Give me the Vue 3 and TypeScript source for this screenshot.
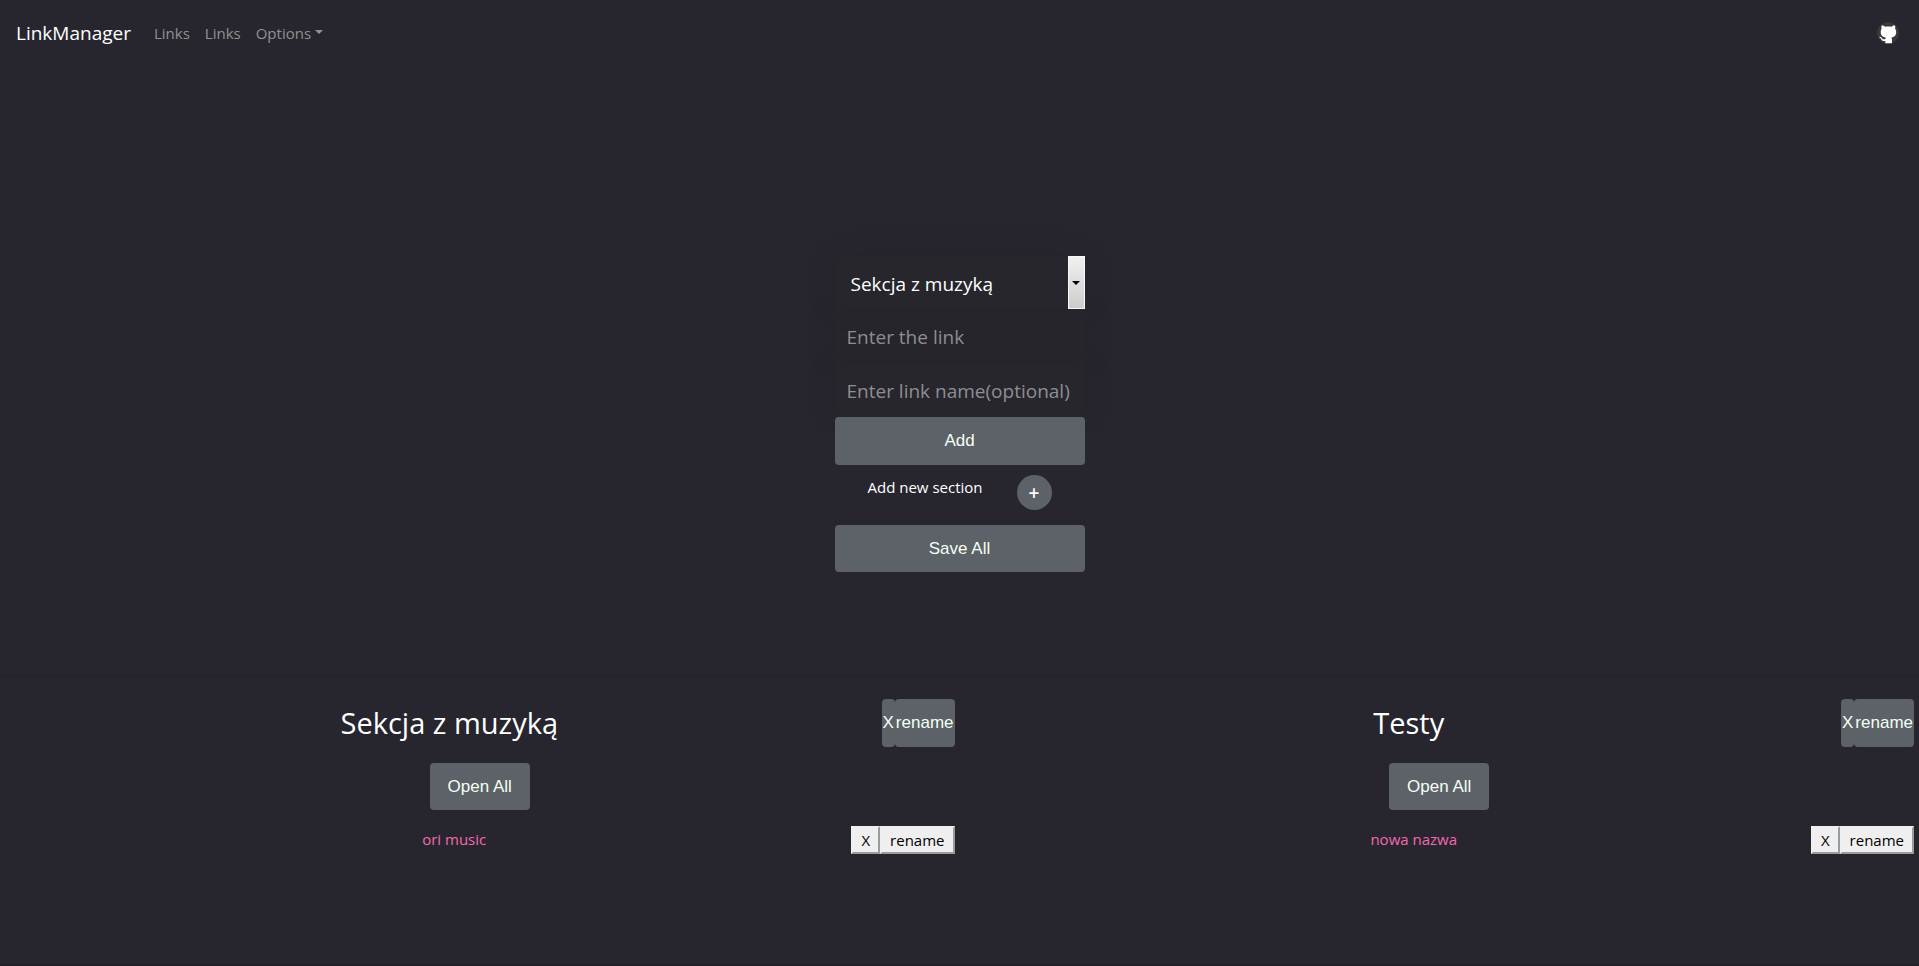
<script setup lang="ts">
import { ref } from 'vue'

interface LinkItem {
  name: string
  url: string
}

interface Section {
  title: string
  links: LinkItem[]
}

const sections = ref<Section[]>([
  { title: 'Sekcja z muzyką', links: [{ name: 'ori music', url: '#ori' }] },
  { title: 'Testy', links: [{ name: 'nowa nazwa', url: '#nowa' }] },
])

const selected = ref('Sekcja z muzyką')
const url = ref('')
const linkName = ref('')

function addLink(): void {
  const section = sections.value.find((s) => s.title === selected.value)
  if (!section || !url.value) return
  section.links.push({ name: linkName.value || url.value, url: url.value })
  url.value = ''
  linkName.value = ''
}

function removeSection(index: number): void {
  sections.value.splice(index, 1)
}

function removeLink(section: Section, index: number): void {
  section.links.splice(index, 1)
}
</script>

<template>
  <div class="page">
    <header class="hero">
      <nav class="navbar">
        <a class="brand" href="#">LinkManager</a>
        <a class="nav-link" href="#links">Links</a>
        <a class="nav-link" href="#more">Links</a>
        <button class="nav-link dropdown" type="button">Options<span class="caret"></span></button>
        <a class="github" href="#github" aria-label="GitHub">
          <svg viewBox="0 0 24 24" width="24" height="24">
            <circle cx="12" cy="12" r="11" fill="#38383d" />
            <path
              fill="#fff"
              d="M5.6 4.6 C7 4.5 8.2 5.1 9.2 5.8 C11 5.3 13.600 5.300 15.400 5.800 C16.400 5.100 17.600 4.500 19 4.600 C19.400 5.700 19.400 6.800 19.100 7.700 C19.900 8.700 20.200 9.800 20.200 11 C20.200 14.500 18.200 16 15.400 16.500 C15.900 17.200 16 18 16 19 V22.200 H9.300 V20 C6.800 20.500 5.800 19.300 5.100 18 C4.700 17.300 4.200 16.800 3.500 16.500 C3 16.200 3.300 15.700 4 15.800 C5.200 15.900 5.800 17 6.400 17.700 C7.200 18.500 8.200 18.500 9.300 18.100 C9.400 17.500 9.500 17 9.800 16.600 C6.800 16 4.700 14.600 4.700 11 C4.700 9.800 5 8.700 5.600 7.700 C5.300 6.800 5.300 5.700 5.600 4.600 Z"
            />
          </svg>
        </a>
      </nav>

      <form class="editor" @submit.prevent="addLink">
        <div class="picker field">
          <select v-model="selected" class="control" aria-label="Section">
            <option v-for="s in sections" :key="s.title">{{ s.title }}</option>
          </select>
          <span class="picker-arrow"><span class="arrow"></span></span>
        </div>
        <input v-model="url" class="control field" type="text" placeholder="Enter the link" aria-label="Link" />
        <input
          v-model="linkName"
          class="control field"
          type="text"
          placeholder="Enter link name(optional)"
          aria-label="Link name"
        />
        <button class="btn wide" type="submit">Add</button>
        <div class="new-section">
          <label for="new-section">Add new section</label>
          <button id="new-section" class="round" type="button">+</button>
        </div>
        <button class="btn" type="button">Save All</button>
      </form>
    </header>

    <main class="sections">
      <section v-for="(s, i) in sections" :key="s.title" class="section">
        <div class="section-head">
          <h2>{{ s.title }}</h2>
          <button class="btn tight" type="button" @click="removeSection(i)">X</button>
          <button class="btn tight" type="button">rename</button>
        </div>
        <button class="btn open" type="button">Open All</button>
        <ul>
          <li v-for="(l, j) in s.links" :key="l.name">
            <a :href="l.url">{{ l.name }}</a>
            <button class="plain" type="button" @click="removeLink(s, j)">X</button>
            <button class="plain" type="button">rename</button>
          </li>
        </ul>
      </section>
    </main>
  </div>
</template>

<style>
body {
  margin: 0;
  background: #27262e;
}
</style>

<style scoped>
.page {
  min-height: 100vh;
  box-sizing: border-box;
  color: #fff;
  background: #27262e;
  border-bottom: 2px solid #222129;
  font-family: 'Segoe UI', 'Open Sans', 'Noto Sans', sans-serif;
  font-size: 15px;
  line-height: 24px;
}

button,
input,
select {
  font: inherit;
  margin: 0;
}

.hero {
  min-height: 70vh;
  border-bottom: 1px solid #222129;
}

.navbar {
  display: flex;
  align-items: center;
  gap: 15px;
  height: 66px;
  padding: 0 19px 0 16px;
}

.navbar a {
  text-decoration: none;
}

.brand {
  margin-right: 8px;
  color: #fff;
  font-size: 19px;
}

.nav-link {
  padding: 0;
  border: 0;
  background: none;
  color: #919095;
}

.dropdown {
  display: flex;
  align-items: center;
  gap: 4px;
}

.caret {
  margin-bottom: 2px;
  border: 4px solid transparent;
  border-top-color: currentColor;
  border-bottom: 0;
}

.github {
  display: flex;
  margin-left: auto;
}

.editor {
  display: flex;
  flex-direction: column;
  width: 250px;
  margin: 190px auto 0;
}

.field {
  height: 54px;
  box-shadow: 0 0 35px rgba(0, 0, 0, 0.07);
}

.control {
  box-sizing: border-box;
  width: 100%;
  padding: 2px 12px 0;
  border: 0;
  outline: 0;
  background: #27262d;
  color: #fff;
  font-size: 19px;
}

.control::placeholder {
  color: #8f8e92;
  opacity: 1;
}

.picker {
  position: relative;
  height: 53px;
}

.picker .control {
  height: 100%;
  padding: 2px 16px 0;
  appearance: none;
}

.picker-arrow {
  position: absolute;
  inset: 0 0 0 auto;
  display: flex;
  align-items: center;
  justify-content: center;
  box-sizing: border-box;
  width: 17px;
  border: 1px solid #f8f8f8;
  background: linear-gradient(#f0f0f0, #cdcdcd);
  pointer-events: none;
}

.arrow {
  border: 4px solid transparent;
  border-top-color: #000;
  border-bottom: 0;
}

.btn {
  height: 47px;
  padding: 0;
  border: 0;
  border-radius: 4px;
  background: #5c6268;
  color: #f4fff4;
  font-family: Arial, 'Liberation Sans', sans-serif;
  font-size: 17px;
}

.new-section {
  display: flex;
  justify-content: space-between;
  height: 50px;
  padding: 10px 33px 0 33px;
}

.round {
  width: 35px;
  height: 35px;
  padding: 0;
  border: 0;
  border-radius: 50%;
  background: #5c6268;
  color: #fff;
  font-size: 19px;
  font-weight: 600;
}

.sections {
  display: grid;
  grid-template-columns: 1fr 1fr;
}

.section {
  display: flex;
  flex-direction: column;
  padding: 22px 5px 0 17px;
}

.section-head {
  display: flex;
}

h2 {
  flex: 1;
  margin: 0;
  font-size: 29px;
  font-weight: 400;
  line-height: 48px;
  text-align: center;
}

.wide,
.tight {
  height: 48px;
}

.tight {
  padding: 0 1px;
}

.open {
  align-self: center;
  width: 100px;
  margin: 16px 12px 16px 0;
}

ul {
  margin: 0;
  padding: 0 0 0 40px;
  list-style: none;
}

li {
  display: flex;
}

li a {
  flex: 1;
  color: #f469ae;
  line-height: 26px;
  text-align: center;
  text-decoration: none;
}

.plain {
  height: 28px;
  padding: 0 8px;
  border: 2px outset #efefef;
  background: #efefef;
  color: #000;
}
</style>
